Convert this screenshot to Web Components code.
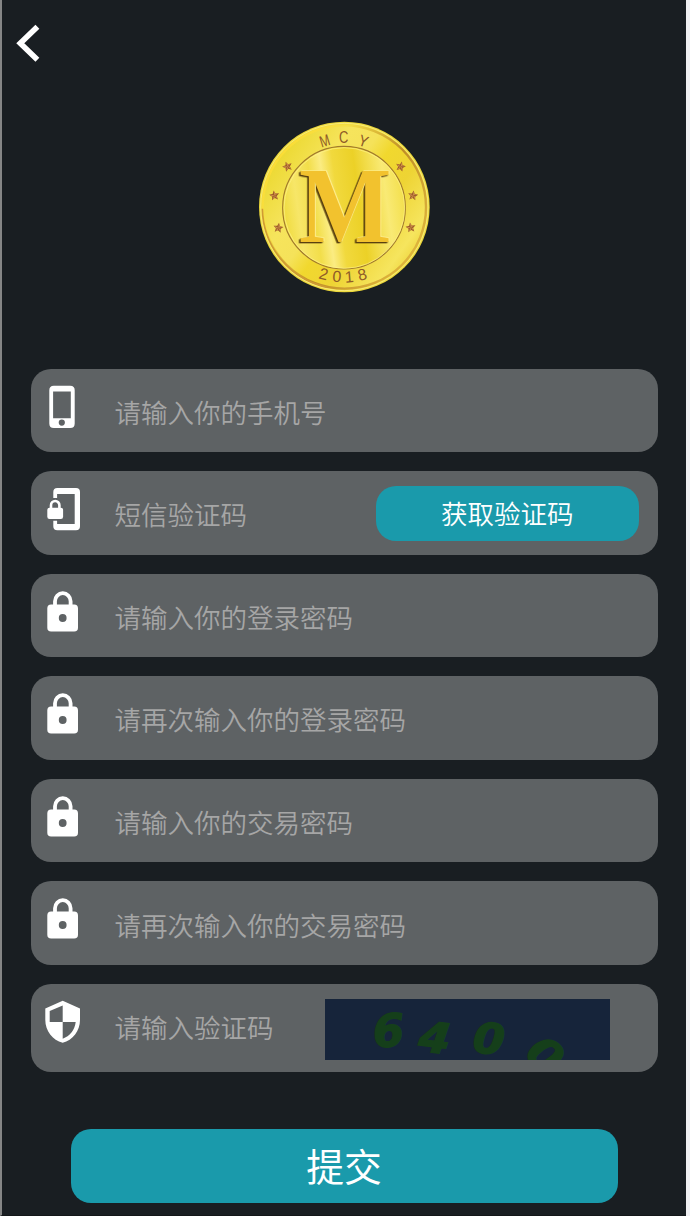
<!DOCTYPE html>
<html lang="zh-CN"><head><meta charset="utf-8"><title>MCY</title>
<style>html,body{margin:0;padding:0;background:#f0f0f3}body{font-family:"Noto Sans CJK SC",sans-serif}</style></head>
<body>
<register-page>
  <back-button></back-button>
  <coin-logo></coin-logo>
  <form-row icon="phone">请输入你的手机号</form-row>
  <form-row icon="sms">短信验证码<pill-button slot="extra">获取验证码</pill-button></form-row>
  <form-row icon="lock">请输入你的登录密码</form-row>
  <form-row icon="lock">请再次输入你的登录密码</form-row>
  <form-row icon="lock">请输入你的交易密码</form-row>
  <form-row icon="lock">请再次输入你的交易密码</form-row>
  <form-row icon="shield" class="last">请输入验证码<captcha-image slot="extra"></captcha-image></form-row>
  <submit-button>提交</submit-button>
</register-page>
<script>
const define = (name, html) => customElements.define(name, class extends HTMLElement {
  constructor() {
    super();
    this.attachShadow({mode: 'open'}).innerHTML = typeof html === 'function' ? html(this) : html;
  }
});

define('register-page', `<style>
:host{display:flex;flex-direction:column;box-sizing:border-box;width:686px;height:1216px;overflow:hidden;background:#191e22;border-left:2px solid #858686;border-bottom:1px solid #131719}
::slotted(form-row){margin:0 28.5px 19.05px}
</style><slot></slot>`);

define('back-button', `<style>:host{display:block;height:122px}svg{display:block}</style>
<svg width="60" height="80" viewBox="2 0 60 80"><path d="M37.4 26.8 20.3 43.3l17.1 16.4" fill="none" stroke="#fff" stroke-width="5.6"/></svg>`);

const star = (x, y, r) => `<g transform="translate(${x} ${y}) rotate(${r})"><path d="M0-15 4-5 15-4 7 3 9 14 0 8-9 14-7 3-15-4-4-5Z" fill="#9c5c28"/><path d="M0-13 0 0 4-4ZM-13-4 0 0-6 3ZM-8 12 0 0 0 7ZM8 12 0 0 6 3ZM13-4 0 0 4-4Z" fill="#cf8d4c"/></g>`;
define('coin-logo', `<style>:host{display:block;height:246.5px;padding-left:248px}svg{display:block;margin-top:-10px}
.big{filter:drop-shadow(3px -2px 0 #fdec8c) drop-shadow(-5px 4px 0 #59400f)}</style>
<svg width="190" height="190" viewBox="0 0 570 570">
<defs>
<linearGradient id="face" x1="0" y1=".15" x2="1" y2=".85"><stop offset="0" stop-color="#f2cf28"/><stop offset=".1" stop-color="#edda36"/><stop offset=".3" stop-color="#f6e45c"/><stop offset=".43" stop-color="#f5e25a"/><stop offset=".52" stop-color="#f1d82e"/><stop offset=".67" stop-color="#eed434"/><stop offset=".86" stop-color="#f6e55e"/><stop offset="1" stop-color="#e9ca25"/></linearGradient>
<linearGradient id="inner" x1="0" y1=".57" x2="1" y2=".43"><stop offset="0" stop-color="#efdb3c"/><stop offset=".13" stop-color="#f7e668"/><stop offset=".26" stop-color="#f2de4a"/><stop offset=".36" stop-color="#fbec82"/><stop offset=".46" stop-color="#f1d93d"/><stop offset=".63" stop-color="#ecd127"/><stop offset=".85" stop-color="#f9ea75"/><stop offset="1" stop-color="#f3df4b"/></linearGradient>
<linearGradient id="rim" x1="0" y1="0" x2="1" y2=".7"><stop offset="0" stop-color="#ffdb29"/><stop offset=".35" stop-color="#f6df46"/><stop offset=".65" stop-color="#bf8d28"/><stop offset="1" stop-color="#dfb53d"/></linearGradient>
</defs>
<circle cx="283" cy="285" r="256" fill="#ecd83a"/>
<circle cx="283" cy="285" r="245" fill="url(#face)" stroke="url(#rim)" stroke-width="7"/>
<path d="M37 290A247 247 0 0 0 230 526" fill="none" stroke="#cf9b34" stroke-width="5"/>
<circle cx="283" cy="285" r="251" fill="none" stroke="#fff397" stroke-width="2"/>
<circle cx="282" cy="287" r="184" fill="url(#inner)" stroke="#a17a2c" stroke-width="3.5"/>
<circle cx="283" cy="288" r="181" fill="none" stroke="#fff38b" stroke-width="2"/>
<g font-family="Liberation Sans,sans-serif" font-size="48" fill="#8f5b28" text-anchor="middle">
<text transform="translate(229 102) rotate(-17)" textLength="30" lengthAdjust="spacingAndGlyphs">M</text><text transform="translate(281 94)" textLength="28" lengthAdjust="spacingAndGlyphs">C</text><text transform="translate(335 103) rotate(19)" textLength="28" lengthAdjust="spacingAndGlyphs">Y</text>
<text transform="translate(217 502) rotate(14)">2</text><text transform="translate(259 510) rotate(5)">0</text><text transform="translate(299 511) rotate(-5)">1</text><text transform="translate(341 504) rotate(-14)">8</text></g>
<text class="big" font-family="Liberation Serif,serif" font-weight="700" font-size="321" x="147" y="389" textLength="277" lengthAdjust="spacingAndGlyphs" fill="#f2c22e">M</text>
${star(112,163,-20)}${star(73,250,-8)}${star(85,347,8)}${star(452,163,15)}${star(489,250,8)}${star(482,346,-8)}
</svg>`);

const icons = {
  phone: `<path fill-rule="evenodd" d="M23.3 16.7H39.7Q44.2 16.7 44.2 21.2V54.5Q44.2 59 39.7 59H23.3Q18.8 59 18.8 54.5V21.2Q18.8 16.7 23.3 16.7ZM22.6 22.5V49.3H40.3V22.5ZM34.4 53.6A3.1 3.1 0 1 0 28.2 53.6 3.1 3.1 0 1 0 34.4 53.6Z"/>`,
  sms: `<path d="M22.8 27V21Q22.8 17 26.8 17H45.5Q49.5 17 49.5 21V55.2Q49.5 59.2 45.5 59.2H26.8Q22.8 59.2 22.8 55.2V49.7H26.6V53H44.2V23H26.6V27Z"/><rect x="16.8" y="36.7" width="15.8" height="11.3" rx="2.2"/><path d="M20.5 37.5V34.2A4.2 4.2 0 0 1 28.9 34.2V37.5" fill="none" stroke="#fff" stroke-width="2.6"/>`,
  lock: `<path fill-rule="evenodd" d="M20.6 30.6H43.7Q47.5 30.6 47.5 34.4V53.8Q47.5 57.6 43.7 57.6H20.6Q16.8 57.6 16.8 53.8V34.4Q16.8 30.6 20.6 30.6ZM36.1 44A3.9 3.9 0 1 0 28.3 44 3.9 3.9 0 1 0 36.1 44Z"/><path d="M24.5 31.5V27.3A7.8 8.1 0 0 1 40.1 27.3V31.5" fill="none" stroke="#fff" stroke-width="3.8"/>`,
  shield: `<path fill-rule="evenodd" d="M32.2 16.8 49.5 24.5V36C49.5 46.8 42.3 56.2 32.2 58.8 22.1 56.2 14.8 46.8 14.8 36V24.5ZM32.2 21.4 19.2 27V38.1H32.2ZM32.2 38.1V54.7C39.3 52.4 44.2 46.3 45.2 38.1Z"/>`
};
define('form-row', el => `<style>
:host{display:flex;flex:none;align-items:flex-start;height:83.55px;border-radius:20px;background:#5e6264;color:#a6a6a6;font-size:26.5px;font-weight:350;line-height:40px;white-space:nowrap}
:host(.last){height:87.5px;margin-bottom:57.1px!important}
svg{display:block;flex:none;fill:#fff}
.label{padding:23.2px 0 0 24px;flex:1}
</style><svg width="60" height="83" viewBox=".5 0 60 83">${icons[el.getAttribute('icon')]}</svg><span class="label"><slot></slot></span><slot name="extra"></slot>`);

define('pill-button', `<style>:host{display:flex;align-items:center;justify-content:center;box-sizing:border-box;width:262.5px;height:55px;margin:15.3px 19px 0 0;padding-bottom:2px;border-radius:20px;background:#1a9aab;color:#fff;font-size:26.5px;font-weight:350}</style><slot></slot>`);

define('captcha-image', `<style>:host{display:block;margin:15.3px 47.5px 0 0}svg{display:block;background:#16243a}</style>
<svg width="285" height="60.5" viewBox="0 0 285 60.5"><g font-family="DejaVu Sans,sans-serif" font-weight="700" font-style="italic" fill="#153f1a" stroke="#153f1a" stroke-width="1.4" text-anchor="middle">
<text transform="translate(63.5 31.5) rotate(-3)" y="16" font-size="45">6</text>
<text transform="translate(110 38.5) rotate(7) scale(1.08 1)" y="15" font-size="42">4</text>
<text transform="translate(164 39.5) rotate(5) scale(1.08 1)" y="15" font-size="42">0</text>
<text transform="translate(220.5 55.5) rotate(40) scale(1.08 1)" y="15.5" font-size="43">0</text></g></svg>`);

define('submit-button', `<style>:host{display:flex;flex:none;align-items:center;justify-content:center;box-sizing:border-box;height:74px;margin:0 68.5px 0 68.5px;padding-bottom:2px;border-radius:20px;background:#1a9aab;color:#fff;font-size:37.8px;line-height:50px}</style><slot></slot>`);
</script></body></html>
